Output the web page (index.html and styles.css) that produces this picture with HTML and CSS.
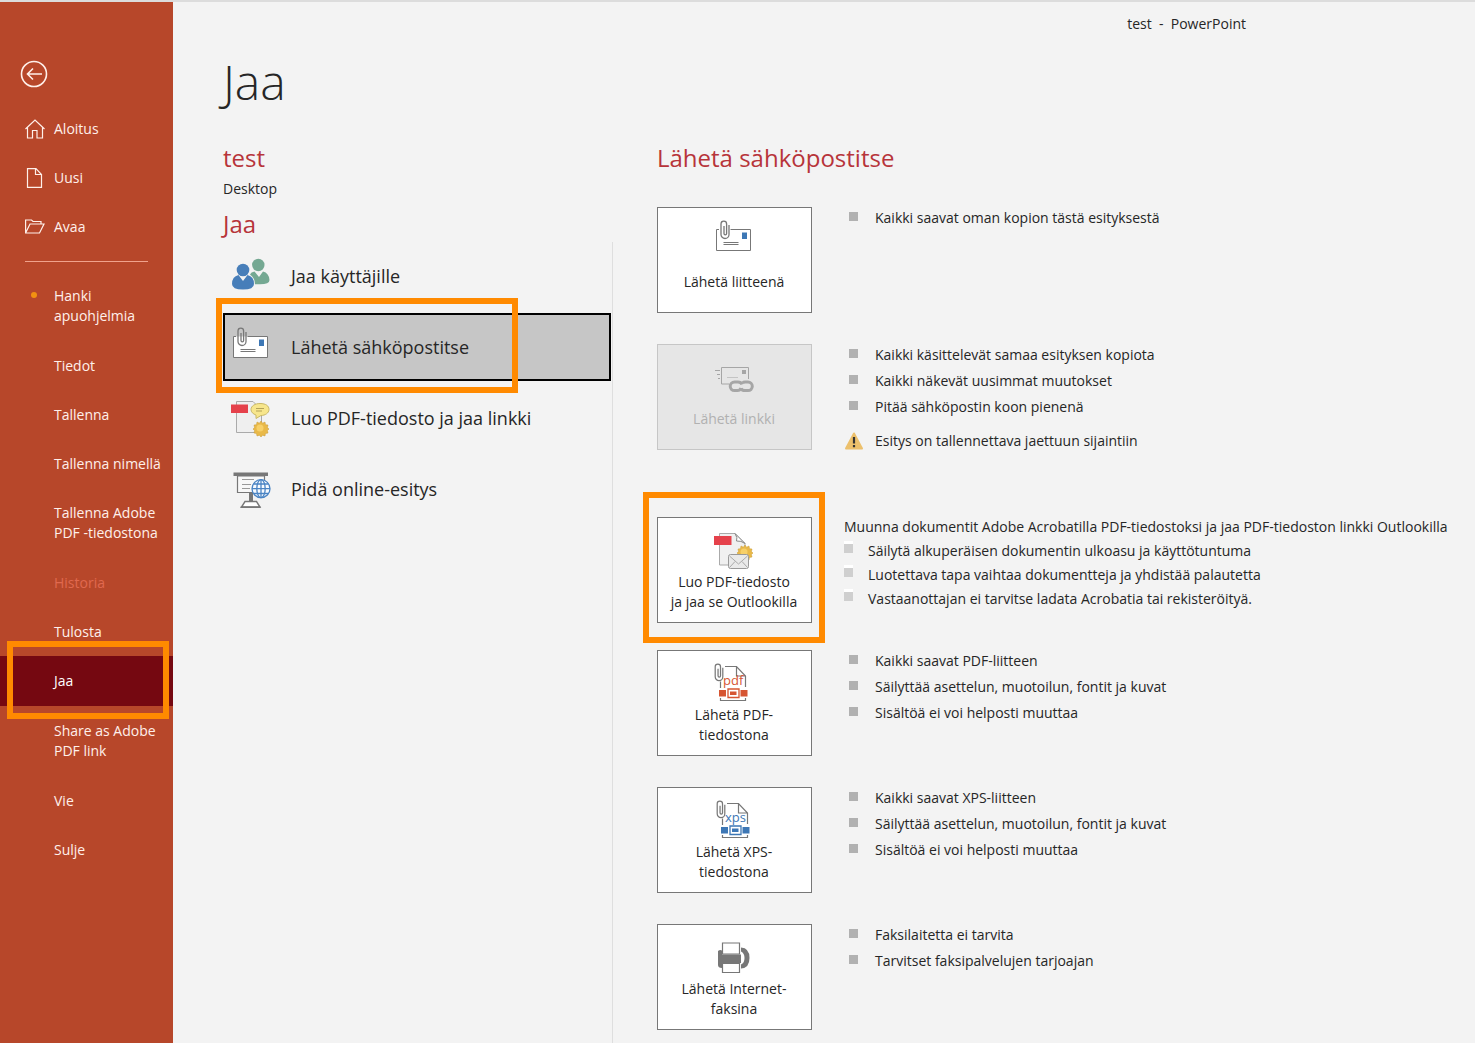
FILE: index.html
```html
<!DOCTYPE html>
<html lang="fi">
<head>
    <meta charset="UTF-8">
    <meta name="viewport" content="width=device-width, initial-scale=1.0">
    <title>test - PowerPoint</title>
    <link rel="stylesheet" href="styles.css">
</head>
<body>
    <!-- Shared icon parts -->
    <svg class="defs" width="0" height="0" aria-hidden="true">
        <symbol id="clip" viewBox="0 0 10 20">
            <path d="M9 5V14.5a4 4 0 0 1-8 0V4a2.8 2.8 0 0 1 5.600 0V13.500a1.300 1.300 0 0 1-2.600 0V6" fill="none" stroke="#777" stroke-width="1.300"/>
        </symbol>
        <symbol id="mail-clip" viewBox="0 0 40 40">
            <path d="M2.500 9.500H36.500V30.500H2.500z" fill="#fff"/>
            <path d="M5 9.500H2.500V30.500H36.500V9.500H16.500M9.500 22.500h15M9.500 24.500h15" fill="none" stroke="#777"/>
            <path d="M28 12.500h5v6.500h-5z" fill="#3d77b5"/>
            <use href="#clip" x="6" y="0" width="10" height="20"/>
        </symbol>
        <symbol id="sun" viewBox="0 0 16 16">
            <path d="M8 0l1.600 2.200L12 1l.5 2.700L15 4l-.6 2.600L16 8l-1.600 1.600.6 2.400-2.600.5L12 15l-2.400-.8L8 16l-1.600-1.800L4 15l-.5-2.500L1 12l.6-2.400L0 8l1.600-1.400L1 4l2.500-.3L4 1l2.400 1.200z" fill="#e9b949" stroke="#c99a35" stroke-width=".5"/>
            <circle cx="7" cy="7" r="3.500" fill="#f7d069"/>
        </symbol>
        <symbol id="file-frame" viewBox="0 0 40 40">
            <use href="#clip" x="0" y="0" width="10" height="19"/>
            <path d="M11 3.500H22.500L31.500 13V24M22.500 3.500V13H31.500M6.500 18.500V25M6.500 35V37.500H31.500V35" fill="none" stroke="#777" stroke-width="1.200"/>
            <path d="M5 27h7v6.500H5zM26.500 27h7v6.500h-7zM16 28.500h6.500v3.500H16z" fill="currentColor"/>
            <path d="M14 26h11v8.500H14z" fill="none" stroke="currentColor" stroke-width="1.300"/>
        </symbol>
    </svg>

    <nav class="sidebar">
        <button class="back" type="button" aria-label="Takaisin">
            <svg width="28" height="28" viewBox="0 0 28 28" fill="none" stroke="currentColor" stroke-width="1.600">
                <circle cx="14" cy="14" r="12.500"/>
                <path d="M22 14H7.500M13 8.500L7.500 14L13 19.500"/>
            </svg>
        </button>
        <a class="nav-item" href="#">
            <svg width="20" height="20" viewBox="0 0 20 20" fill="none" stroke="currentColor" stroke-width="1.200"><path d="M.5 10L10 1L19.500 10M2.500 8.500V19H7.500V11.500H12V19H17.500V8.500"/></svg>
            <span>Aloitus</span>
        </a>
        <a class="nav-item" href="#">
            <svg width="20" height="20" viewBox="0 0 20 20" fill="none" stroke="currentColor" stroke-width="1.200"><path d="M2.500 .7H11L16.500 6.500V19.300H2.500zM10.500 .7V6.500H16.500"/></svg>
            <span>Uusi</span>
        </a>
        <a class="nav-item" href="#">
            <svg width="20" height="20" viewBox="0 0 20 20" fill="none" stroke="currentColor" stroke-width="1.200"><path d="M.6 16V3H6.500L8 4.500H16V7M.6 16L5 7H19L14.500 16z"/></svg>
            <span>Avaa</span>
        </a>
        <hr>
        <a class="nav-item two-line" href="#"><i class="dot"></i><span>Hanki apuohjelmia</span></a>
        <a class="nav-item" href="#"><span>Tiedot</span></a>
        <a class="nav-item" href="#"><span>Tallenna</span></a>
        <a class="nav-item" href="#"><span>Tallenna nimellä</span></a>
        <a class="nav-item two-line" href="#"><span>Tallenna Adobe PDF -tiedostona</span></a>
        <a class="nav-item disabled" aria-disabled="true"><span>Historia</span></a>
        <a class="nav-item" href="#"><span>Tulosta</span></a>
        <a class="nav-item selected highlight" href="#" aria-current="page"><span>Jaa</span></a>
        <a class="nav-item two-line" href="#"><span>Share as Adobe PDF link</span></a>
        <a class="nav-item" href="#"><span>Vie</span></a>
        <a class="nav-item" href="#"><span>Sulje</span></a>
    </nav>

    <main>
        <header class="titlebar">test&nbsp; -&nbsp; PowerPoint</header>
        <h1>Jaa</h1>

        <div class="columns">
            <section class="share">
                <h2>test</h2>
                <p class="location">Desktop</p>
                <h2>Jaa</h2>
                <div class="options">
                    <button class="option" type="button">
                        <svg width="40" height="40" viewBox="0 0 40 40">
                            <g fill="#74a892">
                                <circle cx="27.300" cy="9" r="6.200"/>
                                <path d="M19 18.500Q20 16 23.500 15.500L28 21L32 15.500Q38 17 38.500 24Q38.500 28.500 28 28.300H24Q24 22 19 18.500z"/>
                            </g>
                            <g fill="#477eb9">
                                <circle cx="12" cy="14" r="6.300"/>
                                <path d="M1 28Q1 20.500 7.500 19L12 25L16.500 19Q23 20.500 23 28Q23 33.500 12 33.500Q1 33.500 1 28z"/>
                            </g>
                        </svg>
                        <span>Jaa käyttäjille</span>
                    </button>
                    <button class="option active highlight" type="button">
                        <svg width="40" height="40"><use href="#mail-clip"/></svg>
                        <span>Lähetä sähköpostitse</span>
                    </button>
                    <button class="option" type="button">
                        <svg width="40" height="40" viewBox="0 0 40 40">
                            <path d="M5.500 3.500H22L30.500 12V34.500H5.500z" fill="#efefef" stroke="#aaa"/>
                            <path d="M0 6.500h17V15H0z" fill="#e5414b"/>
                            <path d="M29 5.500c6 0 9 2.500 9 6s-4 6-8 6L25 20.500V17c-3-1-5-3-5-5.500c0-3.500 4-6 9-6z" fill="#f7e68c" stroke="#c9b866"/>
                            <path d="M25 10.500h8M25 13h6" stroke="#b3a258"/>
                            <use href="#sun" x="22" y="23" width="16" height="16"/>
                        </svg>
                        <span>Luo PDF-tiedosto ja jaa linkki</span>
                    </button>
                    <button class="option" type="button">
                        <svg width="40" height="40" viewBox="0 0 40 40">
                            <path d="M6.500 7H33.500V23.500H6.500z" fill="#f8f8f8" stroke="#777" stroke-width="1.200"/>
                            <path d="M2.500 3.500H37V7H2.500z" fill="#777"/>
                            <path d="M11 10.500H23M11 15.500H20M11 19.500H19" stroke="#999"/>
                            <path d="M18 23.500h4V33h-4z" fill="#777"/>
                            <path d="M14 32.500H25.500L29 38H10.500z" fill="#fff" stroke="#777" stroke-width="1.400"/>
                            <path d="M9.500 37.500h20V39h-20z" fill="#777"/>
                            <g fill="none" stroke="#4a84c4" stroke-width="1.300">
                                <circle cx="30" cy="19.700" r="9" fill="#f8fbff"/>
                                <ellipse cx="30" cy="19.700" rx="4.200" ry="9"/>
                                <path d="M30 10.700V28.700M21 19.700H39M22.500 15H37.500M22.500 24.500H37.500"/>
                            </g>
                        </svg>
                        <span>Pidä online-esitys</span>
                    </button>
                </div>
            </section>

            <section class="email">
                <h2>Lähetä sähköpostitse</h2>

                <div class="row">
                    <button class="send" type="button">
                        <svg width="40" height="40"><use href="#mail-clip"/></svg>
                        <span>Lähetä liitteenä</span>
                    </button>
                    <ul>
                        <li>Kaikki saavat oman kopion tästä esityksestä</li>
                    </ul>
                </div>

                <div class="row tall">
                    <button class="send" type="button" disabled>
                        <svg width="40" height="40" viewBox="0 0 40 40" fill="none" stroke="#a6a6a6">
                            <path d="M15 27H7.500V10.500H34.500V22M1 13.500H6M3 17.500H6M4 21.500H6"/>
                            <path d="M13 20.500H24" stroke="#c4c4c4"/>
                            <path d="M28 13h4v4h-4z" fill="#a6a6a6" stroke="none"/>
                            <g stroke-width="3">
                                <path d="M28 27.500Q27 25 24 25H20.500a4.300 4.300 0 0 0 0 8.600H23.500Q26 33.600 27 31"/>
                                <path d="M27 31.500Q28 33.600 31 33.600H34a4.300 4.300 0 0 0 0-8.600H31Q29.500 25 28.500 26"/>
                            </g>
                        </svg>
                        <span>Lähetä linkki</span>
                    </button>
                    <div>
                        <ul>
                            <li>Kaikki käsittelevät samaa esityksen kopiota</li>
                            <li>Kaikki näkevät uusimmat muutokset</li>
                            <li>Pitää sähköpostin koon pienenä</li>
                        </ul>
                        <p class="warning">
                            <svg width="20" height="18" viewBox="0 0 20 18">
                                <path d="M10 1.500L18 16.500H2z" fill="#ecc06c" stroke="#ecc06c" stroke-width="2" stroke-linejoin="round"/>
                                <path d="M10 5V11.500M10 13V15.300" stroke="#333" stroke-width="2.200"/>
                            </svg>
                            Esitys on tallennettava jaettuun sijaintiin
                        </p>
                    </div>
                </div>

                <div class="row acrobat">
                    <button class="send highlight" type="button">
                        <svg width="40" height="40" viewBox="0 0 40 40">
                            <path d="M5.500 3.500H21L31 13.500V35H5.500z" fill="#f0f0f0" stroke="#aaa"/>
                            <path d="M21 3.500Q24 8 22.500 11Q27 10.500 31 13.500z" fill="#fff" stroke="#888"/>
                            <path d="M0 6h17.500v9H0z" fill="#e5414b"/>
                            <use href="#sun" x="23" y="15" width="16" height="16"/>
                            <rect x="14.500" y="24.500" width="20" height="14" rx="2" fill="#e9e9e9" stroke="#999"/>
                            <path d="M15.500 26L24.500 34L33.500 26M15.500 37.500L21 31.500M33.500 37.500L28 31.500" fill="none" stroke="#aaa"/>
                        </svg>
                        <span>Luo PDF-tiedosto<br>ja jaa se Outlookilla</span>
                    </button>
                    <div>
                        <p>Muunna dokumentit Adobe Acrobatilla PDF-tiedostoksi ja jaa PDF-tiedoston linkki Outlookilla</p>
                        <ul>
                            <li>Säilytä alkuperäisen dokumentin ulkoasu ja käyttötuntuma</li>
                            <li>Luotettava tapa vaihtaa dokumentteja ja yhdistää palautetta</li>
                            <li>Vastaanottajan ei tarvitse ladata Acrobatia tai rekisteröityä.</li>
                        </ul>
                    </div>
                </div>

                <div class="row">
                    <button class="send" type="button">
                        <svg class="pdf" width="40" height="40" viewBox="0 0 40 40">
                            <use href="#file-frame"/>
                            <text x="9" y="22">pdf</text>
                        </svg>
                        <span>Lähetä PDF-<br>tiedostona</span>
                    </button>
                    <ul>
                        <li>Kaikki saavat PDF-liitteen</li>
                        <li>Säilyttää asettelun, muotoilun, fontit ja kuvat</li>
                        <li>Sisältöä ei voi helposti muuttaa</li>
                    </ul>
                </div>

                <div class="row">
                    <button class="send" type="button">
                        <svg class="xps" width="40" height="40" viewBox="-2 0 40 40">
                            <use href="#file-frame" width="40" height="40"/>
                            <text x="9" y="22">xps</text>
                        </svg>
                        <span>Lähetä XPS-<br>tiedostona</span>
                    </button>
                    <ul>
                        <li>Kaikki saavat XPS-liitteen</li>
                        <li>Säilyttää asettelun, muotoilun, fontit ja kuvat</li>
                        <li>Sisältöä ei voi helposti muuttaa</li>
                    </ul>
                </div>

                <div class="row">
                    <button class="send" type="button">
                        <svg width="40" height="40" viewBox="0 0 40 40">
                            <path d="M4 14Q6 12.500 8 13.500V17.500H27V26H8V31Q4 31 4 28z" fill="#777"/>
                            <path d="M27 10.500Q35.500 11 35.500 21Q35.500 31 27 31.500V27.500Q30.500 26 30.500 21Q30.500 16 27 14.500z" fill="#777"/>
                            <path d="M8.500 6h17V17h-17zM8.500 26.500h17v9h-17z" fill="#fff" stroke="#777" stroke-width="1.200"/>
                        </svg>
                        <span>Lähetä Internet-<br>faksina</span>
                    </button>
                    <ul>
                        <li>Faksilaitetta ei tarvita</li>
                        <li>Tarvitset faksipalvelujen tarjoajan</li>
                    </ul>
                </div>
            </section>
        </div>
    </main>
</body>
</html>
```

FILE: styles.css
```css
* {
    box-sizing: border-box;
}

body {
    display: flex;
    min-height: 100vh;
    margin: 0;
    border-top: 2px solid #dcdcdc;
    background-color: #f3f3f3;
    color: #262626;
    font-family: "Open Sans", "Noto Sans", sans-serif;
    font-size: 14px;
    line-height: 20px;
}

h1, h2, p, ul {
    margin: 0;
    padding: 0;
    font-weight: 400;
}

button {
    font: inherit;
    color: inherit;
    cursor: pointer;
}

.defs {
    position: absolute;
}

/* Orange marker frame */
.highlight {
    position: relative;
}

.highlight::after {
    content: "";
    position: absolute;
    border: 6px solid #ff8a00;
    pointer-events: none;
}

/* Sidebar */
.sidebar {
    flex: 0 0 173px;
    padding-top: 58px;
    background-color: #b7472a;
    color: #fff0ea;
}

.back {
    display: block;
    width: 28px;
    height: 28px;
    margin: 0 0 16px 20px;
    padding: 0;
    border: none;
    background: none;
}

.nav-item {
    display: grid;
    grid-template-columns: 20px 1fr;
    column-gap: 9px;
    padding: 15px 6px 14px 25px;
    color: inherit;
    text-decoration: none;
}

.nav-item span {
    grid-column: 2;
}

.nav-item.two-line,
.nav-item.selected {
    padding-bottom: 15px;
}

.nav-item.disabled {
    color: #e0694f;
}

.nav-item.selected {
    background-color: #750811;
    color: #fff;
}

.nav-item.highlight::after {
    top: -15px;
    right: 4px;
    bottom: -13px;
    left: 7px;
}

.dot {
    width: 6px;
    height: 6px;
    margin: 6px;
    border-radius: 50%;
    background-color: #f29111;
}

.sidebar hr {
    height: 1px;
    margin: 10px 25px 9px;
    border: none;
    background-color: #f0a28c;
}

/* Main area */
main {
    flex: 1;
    min-width: 0;
    display: flex;
    flex-direction: column;
    padding-left: 50px;
}

.titlebar {
    padding: 12px 229px 0 0;
    text-align: right;
}

h1 {
    margin: 18px 0 30px;
    font-size: 48px;
    font-weight: 300;
    line-height: 60px;
}

h2 {
    color: #b7343a;
    font-size: 24px;
    line-height: 32px;
}

.columns {
    flex: 1;
    display: grid;
    grid-template-columns: 390px 1fr;
    column-gap: 44px;
}

.share {
    display: flex;
    flex-direction: column;
}

.location {
    margin: 5px 0 9px;
}

.options {
    flex: 1;
    display: flex;
    flex-direction: column;
    gap: 3px;
    margin-top: 2px;
    padding-right: 1px;
    border-right: 1px solid #dedede;
}

.option {
    display: flex;
    align-items: center;
    gap: 20px;
    height: 68px;
    padding: 0 6px;
    border: 2px solid transparent;
    background: none;
    font-size: 18px;
    text-align: left;
}

.option.active {
    border-color: #000;
    background-color: #c6c6c6;
}

.option.highlight::after {
    top: -17px;
    right: 91px;
    bottom: -14px;
    left: -9px;
}

/* Send options */
.email h2 {
    margin-bottom: 33px;
}

.row {
    display: grid;
    grid-template-columns: 155px 1fr;
    column-gap: 37px;
    margin-bottom: 31px;
}

.row.tall {
    margin-bottom: 67px;
}

.row.acrobat {
    column-gap: 32px;
    margin-bottom: 27px;
}

.send {
    display: flex;
    flex-direction: column;
    align-items: center;
    gap: 2px;
    height: 106px;
    padding: 12px 1px 0 0;
    border: 1px solid #777;
    background-color: #fff;
}

.send span {
    display: flex;
    align-items: center;
    height: 40px;
}

.send:disabled {
    border-color: #c6c6c6;
    background-color: #e6e6e6;
    color: #b1b1b1;
    cursor: default;
}

.send.highlight::after {
    top: -26px;
    right: -14px;
    bottom: -21px;
    left: -15px;
}

.send text {
    fill: currentColor;
    font-size: 13px;
}

.pdf {
    color: #d65532;
}

.xps {
    color: #3d77b5;
}

.row ul {
    list-style: none;
}

.row li {
    display: flex;
    gap: 17px;
    line-height: 26px;
}

.row li::before {
    content: "";
    flex: 0 0 9px;
    height: 9px;
    margin-top: 7px;
    background-color: #b1b1b1;
}

.row > ul,
.row.tall ul {
    margin-top: -2px;
}

.row.tall > div {
    height: 106px;
}

.warning {
    display: flex;
    align-items: center;
    gap: 11px;
    margin: 11px 0 0 -5px;
}

.acrobat ul {
    margin-top: 2px;
}

.acrobat li {
    gap: 15px;
    line-height: 24px;
}

.acrobat li::before {
    margin-top: 5px;
    background-color: #cfcfcf;
    box-shadow: 0 -3px #fff;
}
```
